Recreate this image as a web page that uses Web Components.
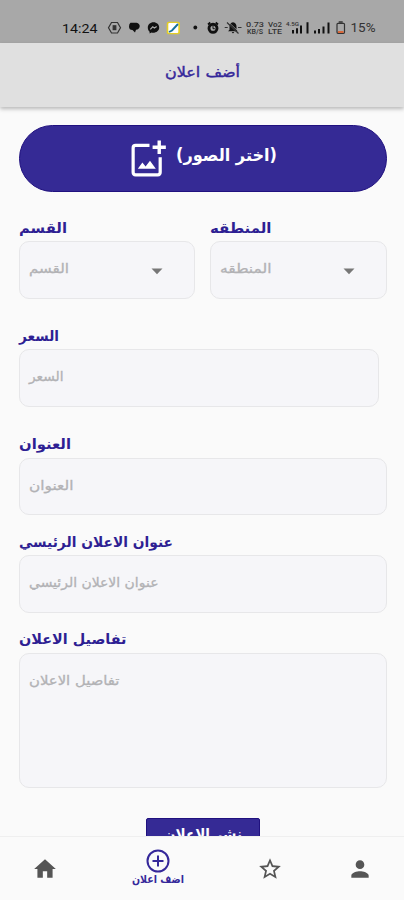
<!DOCTYPE html>
<html lang="ar"><head><meta charset="utf-8"><title>أضف اعلان</title>
<style>html,body{margin:0;height:100%;overflow:hidden;background:#fafafa}</style></head>
<body><post-screen></post-screen>
<script>
const define=(name,html,after)=>{
  const t=document.createElement('template');t.innerHTML=html;
  customElements.define(name,class extends HTMLElement{
    constructor(){super();this.attachShadow({mode:'open'}).append(t.content.cloneNode(true));}
    connectedCallback(){if(after)after(this,this.shadowRoot);}
  });
};
// Single line of text, condensed or widened to the width given in "w".
define('fit-text',`<style>:host{display:block;flex:none;white-space:nowrap;line-height:20px;height:20px}
span{display:inline-block;transform-origin:0 50%}</style><span dir="auto"><slot></slot></span>`,(el,r)=>{
  const w=+el.getAttribute('w'),s=r.querySelector('span');
  el.style.width=w+'px';
  if(el.hasAttribute('size'))el.style.fontSize=el.getAttribute('size')+'px';
  requestAnimationFrame(()=>{
    s.style.transform='none';
    const n=s.getBoundingClientRect().width;
    if(n)s.style.transform='scaleX('+w/n+')';
  });
});
define('status-bar',`<style>:host{display:block;height:43px;background:#a8a8a8;color:#161616;font-family:Roboto,"Noto Sans",sans-serif}
svg{display:block;width:404px;height:43px}</style>
<svg viewBox="0 0 404 43" fill="#111">
<text x="62" y="32.500" font-size="13.500" textLength="35.500" lengthAdjust="spacingAndGlyphs">14:24</text>
<g fill="none" stroke="#333" stroke-width="1.200"><path d="M111.500 22.500h6l3 5.300-3 5.200h-6l-3-5.200z"/><rect x="113.200" y="25.800" width="2.600" height="3.800" fill="#333"/></g>
<path d="M130.500 22.800h6q3.500 1 3.200 3.700-.5 3-3.700 3.300l-1 2.700-2.500-2.500q-3.500 0-3.500-3.500 0-2.700 1.500-3.700z"/>
<path d="M153.500 22.300c-3.300 0-5.700 2.400-5.700 5.400 0 1.700.7 3 1.800 4v1.800l1.900-1c3.900.9 7.700-1.500 7.700-4.800 0-3-2.400-5.400-5.700-5.400z"/><path d="m150.300 29.300 2.400-2.500 1.700 1.300 2.300-1.700" stroke="#aaa" stroke-width="1.200" fill="none"/>
<rect x="166.700" y="21.700" width="13.300" height="12.600" rx="2" fill="#e4ce27"/><rect x="168.300" y="23" width="10" height="10" rx="1" fill="#fff"/><path d="m169 32 3-1.500 6-6.500" fill="none" stroke="#16719b" stroke-width="1.900"/>
<circle cx="195.300" cy="27.500" r="1.900"/>
<circle cx="213" cy="28.300" r="4" fill="none" stroke="#111" stroke-width="2.900"/><path d="m208 24.500 2.300-2M218 24.500l-2.300-2" stroke="#111" stroke-width="1.800"/><path d="M213 26v2.700h1.800" fill="none" stroke="#111"/>
<path d="M233 22.200q3.500.8 3.500 4.500v3l1.500 1.600h-10l1.500-1.600v-3q0-3.700 3.500-4.500zM231.700 32h2.600l-1.300 1.400z"/><path d="m227 22.500 11.500 11M224.700 27.500h3M238 27.500h3.500" stroke="#333" stroke-width="1.200"/><path d="m228.500 22 11 10.500" stroke="#a8a8a8" stroke-width=".7"/>
<g font-size="6.500" font-weight="500" fill="#333"><text x="246" y="26.500" textLength="18" lengthAdjust="spacingAndGlyphs">0.73</text><text x="247" y="34" textLength="16" lengthAdjust="spacingAndGlyphs">KB/S</text>
<text x="268" y="26.500" textLength="14" lengthAdjust="spacingAndGlyphs">Vo2</text><text x="268" y="34" textLength="14" lengthAdjust="spacingAndGlyphs">LTE</text>
<text x="286" y="26" font-size="5.500" textLength="13" lengthAdjust="spacingAndGlyphs">4.5G</text></g>
<path d="M292 30h2v3.500h-2zM296 28.300h2v5.200h-2zM300 25.500h2v8h-2zM306.500 22.300h2v11.200h-2zM314 30.500h2v3h-2zM318 29h2v4.500h-2zM322.500 26.500h2v7h-2zM327.500 22.500h2v11h-2z"/>
<path d="M338.700 22h4" stroke="#333" stroke-width="1.500"/><rect x="337" y="23.300" width="7.500" height="10" rx="1" fill="none" stroke="#333" stroke-width="1.200"/><path d="M338 31h5.500v2H338z" fill="#d8683a"/>
<text x="350.500" y="32" font-size="13" fill="#333" textLength="25" lengthAdjust="spacingAndGlyphs">15%</text></svg>`);
define('app-header',`<style>:host{display:flex;justify-content:center;align-items:flex-start;box-sizing:border-box;height:63.500px;padding-top:19px;background:#e0e0e0;box-shadow:0 2px 4px #0004;position:relative;color:#35289a;-webkit-text-stroke:.4px #35289a}</style><fit-text w="75" size="14"><slot></slot></fit-text>`);
define('photo-picker',`<style>:host{display:flex;box-sizing:border-box;height:67px;border:1px solid #20117f;border-radius:34px;background:#352a95;color:#fff;padding:14px 0 0 111px;gap:9px;font-weight:700}
svg{display:block;width:36px;height:37px;flex:none}fit-text{margin-top:5px}</style>
<svg viewBox="0 0 37 37" fill="none" stroke="#fff" stroke-width="3.300"><path d="M19 5.800H4.800Q2.200 5.800 2.200 8.400v25q0 2.600 2.600 2.600h22.600q2.600 0 2.600-2.600V18" transform="translate(0 -.7)"/><path d="M29 0v14M22.200 7h13.600" stroke-width="3.500"/><path d="m7 29 4.700-6.300 3.300 4 4.500-6 6 8.300z" fill="#fff" stroke="none"/></svg><fit-text w="101" size="17"><slot></slot></fit-text>`);
define('form-field',`<style>:host{display:block;box-sizing:border-box}.l{height:23.500px;color:#2e1f93;font-weight:700}
.b{display:flex;justify-content:space-between;box-sizing:border-box;height:var(--h,57.500px);border:1.500px solid #e7e7e9;border-radius:10px;background:#f6f6f9;color:#b2b2b5;-webkit-text-stroke:.3px #b2b2b5;padding:17px 31px 0 9px}
svg{width:12px;height:7px;margin-top:9px;display:none}:host([select]) svg{display:block}</style>
<div class="l"></div><div class="b"><svg viewBox="0 0 12 7"><path d="M.5.500h11L6 6.300z" fill="#777"/></svg></div>`,(el,r)=>{
  const line=(w,size)=>{const f=document.createElement('fit-text');f.setAttribute('w',el.getAttribute(w));f.setAttribute('size',size);f.textContent=el.getAttribute('label');return f;};
  r.querySelector('.l').append(line('lw',14));
  r.querySelector('.b').prepend(line('hw',13));
});
define('submit-button',`<style>:host{display:flex;justify-content:center;box-sizing:border-box;width:114px;height:38px;padding-top:6px;border:1px solid #20117f;border-radius:2px;background:#352a95;color:#fff;font-weight:700}</style><fit-text w="78" size="16"><slot></slot></fit-text>`);
define('nav-item',`<style>:host{display:flex;flex-direction:column;align-items:center;box-sizing:border-box;flex:0 0 90px;padding-top:19px;color:#555}
:host([active]){flex-basis:135px;padding-top:12px;color:#35289a;font-weight:700}</style><slot></slot>`);
define('bottom-nav',`<style>:host{display:flex;box-sizing:border-box;height:64px;border-top:1px solid #efefef;background:#fafafa}
svg{display:block;width:26px;height:26px;fill:currentColor}nav-item[active] svg{width:24px;height:24px}fit-text{margin-top:-3px}</style>
<nav-item><svg viewBox="0 0 24 24"><path d="M10 20v-6h4v6h5v-8h3L12 3 2 12h3v8z"/></svg></nav-item>
<nav-item active><svg viewBox="0 0 24 24" style="fill:none;stroke:currentColor;stroke-width:2"><circle cx="12" cy="12" r="10.500"/><path d="M12 6.500v11M6.500 12h11"/></svg><fit-text w="52" size="11">اضف اعلان</fit-text></nav-item>
<nav-item><svg viewBox="0 0 24 24"><path d="m22 9.240-7.190-.62L12 2 9.190 8.630 2 9.240l5.460 4.730L5.820 21 12 17.270 18.180 21l-1.630-7.030zM12 15.400l-3.760 2.270 1-4.280-3.320-2.880 4.380-.38L12 6.100l1.710 4.040 4.380.38-3.320 2.880 1 4.280z"/></svg></nav-item>
<nav-item><svg viewBox="0 0 24 24"><path d="M12 12c2.210 0 4-1.790 4-4s-1.790-4-4-4-4 1.790-4 4 1.790 4 4 4zm0 2c-2.670 0-8 1.340-8 4v2h16v-2c0-2.660-5.330-4-8-4z"/></svg></nav-item>`);
define('post-screen',`<style>:host{display:flex;flex-direction:column;width:404px;height:900px;background:#fafafa;font-family:"DejaVu Sans",sans-serif}
main{flex:1;min-height:0;overflow:hidden;padding:18px 17.500px 0 18.500px;display:flex;flex-direction:column}
.row{display:grid;grid-template-columns:176px 177px;justify-content:space-between;margin-top:26px}
form-field,photo-picker,submit-button{flex:none}submit-button{align-self:center;margin-top:30px}</style>
<status-bar></status-bar><app-header>أضف اعلان</app-header><main><photo-picker>(اختر الصور)</photo-picker>
<div class="row"><form-field select label="القسم" lw="48" hw="40"></form-field><form-field select label="المنطقه" lw="61.500" hw="51.500"></form-field></div>
<form-field label="السعر" lw="40" hw="34.500" style="margin:27px 8px 0 0"></form-field>
<form-field label="العنوان" lw="52" hw="44.500" style="margin-top:27.500px"></form-field>
<form-field label="عنوان الاعلان الرئيسي" lw="154" hw="129.500" style="margin-top:16.500px"></form-field>
<form-field label="تفاصيل الاعلان" lw="107.500" hw="90.500" style="margin-top:16.500px;--h:135px"></form-field>
<submit-button>نشر الاعلان</submit-button></main><bottom-nav></bottom-nav>`);
</script></body></html>
